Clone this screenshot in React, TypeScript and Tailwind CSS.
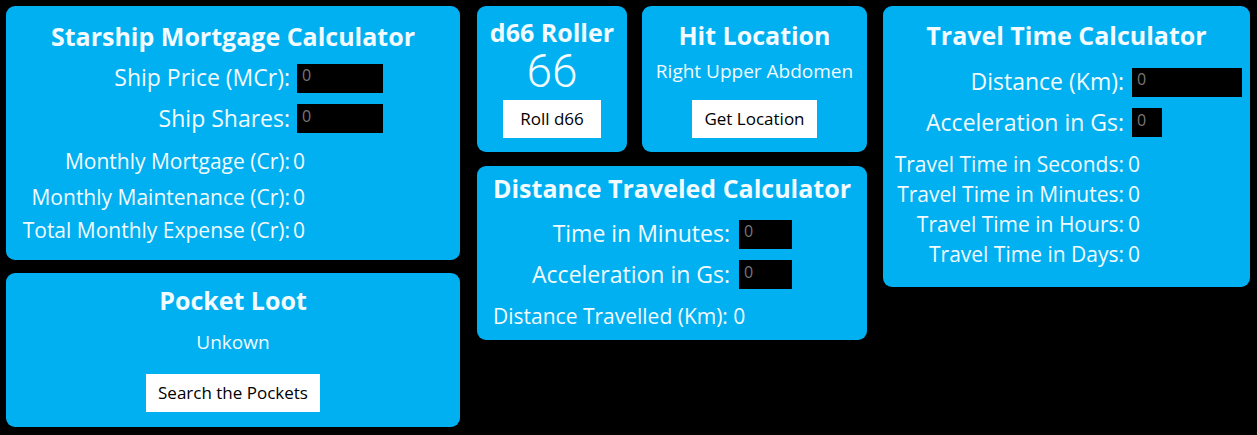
import React from 'react';

const font = { fontFamily: '"Open Sans", "Liberation Sans", sans-serif' };

function Field({ w }: { w: string }) {
  return (
    <input
      placeholder="0"
      className={`${w} h-[29px] bg-black text-white placeholder:text-[#777] text-[16px] pl-[5px] pb-[6px] outline-none border-0`}
    />
  );
}

function Card({ className, children }: { className: string; children: React.ReactNode }) {
  return <div className={`bg-[#00b0f0] rounded-[9px] text-[#f2fbff] ${className}`}>{children}</div>;
}

export default function App() {
  return (
    <div className="min-h-screen bg-black p-[6px] flex items-start" style={font}>
      {/* left column */}
      <div className="w-[454px] flex flex-col gap-[13px]">
        <Card className="h-[254px] pt-[15px]">
          <h1 className="text-center text-[25px] font-bold leading-[30px]">Starship Mortgage Calculator</h1>
          <div className="mt-[12px] grid grid-cols-[284px_1fr] gap-y-[11px] items-center">
            <span className="text-right text-[23px] leading-[29px]">Ship Price (MCr):</span>
            <div className="pl-[7px]"><Field w="w-[86px]" /></div>
            <span className="text-right text-[23px] leading-[29px]">Ship Shares:</span>
            <div className="pl-[7px]"><Field w="w-[86px]" /></div>
          </div>
          <div className="mt-[15px] grid grid-cols-[284px_1fr] text-[21px]">
            <span className="text-right leading-[26px]">Monthly Mortgage (Cr):</span>
            <span className="pl-[3px] leading-[26px]">0</span>
            <span className="text-right leading-[26px] mt-[10px]">Monthly Maintenance (Cr):</span>
            <span className="pl-[3px] leading-[26px] mt-[10px]">0</span>
            <span className="text-right leading-[26px] mt-[7px]">Total Monthly Expense (Cr):</span>
            <span className="pl-[3px] leading-[26px] mt-[7px]">0</span>
          </div>
        </Card>
        <Card className="h-[154px] pt-[12px] flex flex-col items-center">
          <h2 className="text-[25px] font-bold leading-[30px]">Pocket Loot</h2>
          <p className="mt-[14px] text-[19px] leading-[26px]">Unkown</p>
          <button className="mt-[19px] h-[38px] px-[12px] bg-white text-black text-[17px]">Search the Pockets</button>
        </Card>
      </div>

      {/* middle column */}
      <div className="ml-[17px] w-[390px] flex flex-col gap-[14px]">
        <div className="flex gap-[15px]">
          <Card className="w-[150px] h-[146px] pt-[12px] flex flex-col items-center">
            <h2 className="text-[25px] font-bold leading-[28px]">d66 Roller</h2>
            <p className="text-[46px] font-light leading-[40px] mt-[5px]" style={{ fontFamily: 'Roboto, sans-serif' }}>66</p>
            <button className="mt-[9px] h-[38px] w-[98px] bg-white text-black text-[17px]">Roll d66</button>
          </Card>
          <Card className="w-[225px] h-[146px] pt-[14px] flex flex-col items-center">
            <h2 className="text-[25px] font-bold leading-[30px]">Hit Location</h2>
            <p className="mt-[9px] text-[19px] leading-[24px]">Right Upper Abdomen</p>
            <button className="mt-[17px] h-[38px] px-[12px] bg-white text-black text-[17px]">Get Location</button>
          </Card>
        </div>
        <Card className="h-[174px] pt-[7px]">
          <h2 className="text-center text-[25px] font-bold leading-[30px]">Distance Traveled Calculator</h2>
          <div className="mt-[16px] grid grid-cols-[253px_1fr] gap-y-[11px] items-center">
            <span className="text-right text-[23px] leading-[29px]">Time in Minutes:</span>
            <div className="pl-[9px]"><Field w="w-[53px]" /></div>
            <span className="text-right text-[23px] leading-[29px]">Acceleration in Gs:</span>
            <div className="pl-[9px]"><Field w="w-[53px]" /></div>
          </div>
          <p className="mt-[14px] pl-[16px] text-[21px] leading-[26px]">Distance Travelled (Km): 0</p>
        </Card>
      </div>

      {/* right column */}
      <div className="ml-[16px] w-[367px]">
        <Card className="h-[281px] pt-[14px]">
          <h2 className="text-center text-[25px] font-bold leading-[30px]">Travel Time Calculator</h2>
          <div className="mt-[17px] grid grid-cols-[241px_1fr] gap-y-[11px] items-center">
            <span className="text-right text-[23px] leading-[29px]">Distance (Km):</span>
            <div className="pl-[8px]"><Field w="w-[110px]" /></div>
            <span className="text-right text-[23px] leading-[29px]">Acceleration in Gs:</span>
            <div className="pl-[8px]"><Field w="w-[30px]" /></div>
          </div>
          <div className="mt-[14px] grid grid-cols-[241px_1fr] gap-y-[4px] text-[21px] leading-[26px]">
            <span className="text-right">Travel Time in Seconds:</span>
            <span className="pl-[4px]">0</span>
            <span className="text-right">Travel Time in Minutes:</span>
            <span className="pl-[4px]">0</span>
            <span className="text-right">Travel Time in Hours:</span>
            <span className="pl-[4px]">0</span>
            <span className="text-right">Travel Time in Days:</span>
            <span className="pl-[4px]">0</span>
          </div>
        </Card>
      </div>
    </div>
  );
}
